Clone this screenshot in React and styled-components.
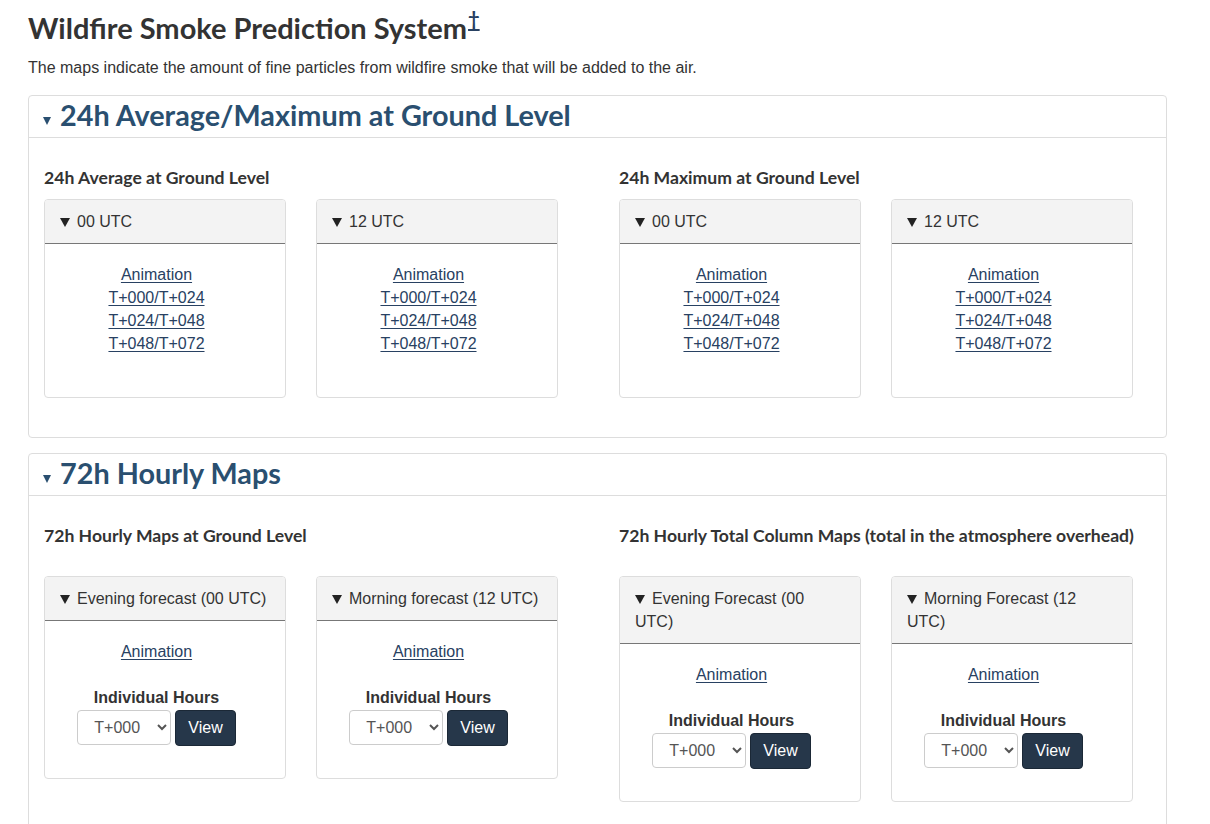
import React from "react";
import styled, { createGlobalStyle } from "styled-components";

const GlobalStyle = createGlobalStyle`
  html, body { margin: 0; padding: 0; background: #fff; }
  body {
    font-family: "Liberation Sans", Arial, sans-serif;
    font-size: 16px;
    line-height: 23px;
    color: #333;
  }
`;

const Page = styled.main`
  width: 1139px;
  padding: 10px 0 0 28px;
`;

const Title = styled.h1`
  font-family: Lato, "Noto Sans", sans-serif;
  font-weight: 700;
  font-size: 29px;
  line-height: 36px;
  margin: 0;
  color: #333;
`;

const FootRef = styled.a`
  font-size: 20px;
  line-height: 0;
  vertical-align: 12px;
  color: #284162;
  text-decoration: underline;
  text-underline-offset: 2px;
  margin-left: 1px;
`;

const Intro = styled.p`
  margin: 10px 0 16px;
`;

const Panel = styled.section`
  border: 1px solid #ddd;
  border-radius: 4px;
  margin-bottom: 15px;
  background: #fff;
`;

const PanelHeader = styled.div`
  display: flex;
  align-items: center;
  height: 41px;
  padding: 0 14px;
  border-bottom: 1px solid #ddd;
`;

const Caret = styled.span`
  display: inline-block;
  width: 0;
  height: 0;
  border-left: 4.5px solid transparent;
  border-right: 4.5px solid transparent;
  border-top: 8px solid #2a4f70;
  margin: 8px 9px 0 0;
`;

const PanelTitle = styled.h2`
  font-family: Lato, "Noto Sans", sans-serif;
  font-weight: 700;
  font-size: 28.8px;
  line-height: 36px;
  margin: -3px 0 0;
  color: #2a4f70;
`;

const PanelBody = styled.div`
  padding: 28px 15px 39px;
`;

const Columns = styled.div`
  display: grid;
  grid-template-columns: 533px 533px;
  column-gap: 42px;
  align-items: start;
`;

const ColTitle = styled.h3`
  font-family: Lato, "Noto Sans", sans-serif;
  font-weight: 700;
  font-size: 17.6px;
  line-height: 24px;
  margin: 0 0 ${(p) => p.$space}px;
  color: #333;
  white-space: nowrap;
`;

const CardGrid = styled.div`
  display: grid;
  grid-template-columns: 242px 242px;
  column-gap: 30px;
  align-items: start;
`;

const Card = styled.div`
  border: 1px solid #ddd;
  border-radius: 4px;
  overflow: hidden;
  background: #fff;
`;

const CardHeader = styled.div`
  background: #f3f3f3;
  border-bottom: 1px solid #777;
  padding: 10px 15px;
  color: #333;
`;

const Tri = styled.span`
  display: inline-block;
  width: 0;
  height: 0;
  border-left: 5px solid transparent;
  border-right: 5px solid transparent;
  border-top: 9px solid #222;
  margin: 0 7px 0 0;
`;

const CardBody = styled.div`
  padding: 19px 32px 20px 15px;
  display: flex;
  flex-direction: column;
  align-items: center;
  text-align: center;
`;

const LinkList = styled.div`
  display: flex;
  flex-direction: column;
  align-items: center;
  margin-bottom: ${(p) => p.$after}px;
`;

const Link = styled.a`
  color: #284162;
  text-decoration: underline;
  text-underline-offset: 2px;
`;

const FormLabel = styled.div`
  font-weight: 700;
  margin-bottom: 1px;
`;

const FormRow = styled.div`
  display: flex;
  align-items: flex-start;
  gap: 4px;
  margin-bottom: 12px;
`;

const Select = styled.select`
  width: 94px;
  height: 35px;
  border: 1px solid #ccc;
  border-radius: 4px;
  background: #fff;
  color: #555;
  font-family: "Liberation Sans", Arial, sans-serif;
  font-size: 16px;
  padding: 0 6px 0 12px;
`;

const Button = styled.button`
  height: 36px;
  padding: 0 12px;
  background: #26374a;
  color: #fff;
  border: 1px solid #1b2836;
  border-radius: 4px;
  font-family: "Liberation Sans", Arial, sans-serif;
  font-size: 16px;
  cursor: pointer;
`;

const LinkCard = ({ title }) => (
  <Card>
    <CardHeader>
      <Tri />
      {title}
    </CardHeader>
    <CardBody>
      <LinkList $after={22}>
        <Link href="#">Animation</Link>
        <Link href="#">T+000/T+024</Link>
        <Link href="#">T+024/T+048</Link>
        <Link href="#">T+048/T+072</Link>
      </LinkList>
    </CardBody>
  </Card>
);

const HourCard = ({ title }) => (
  <Card>
    <CardHeader>
      <Tri />
      {title}
    </CardHeader>
    <CardBody>
      <LinkList $after={23}>
        <Link href="#">Animation</Link>
      </LinkList>
      <FormLabel>Individual Hours</FormLabel>
      <FormRow>
        <Select defaultValue="T+000">
          {Array.from({ length: 73 }, (_, i) => {
            const v = "T+" + String(i).padStart(3, "0");
            return (
              <option key={v} value={v}>
                {v}
              </option>
            );
          })}
        </Select>
        <Button type="button">View</Button>
      </FormRow>
    </CardBody>
  </Card>
);

export default function App() {
  return (
    <>
      <GlobalStyle />
      <Page>
        <Title>
          Wildfire Smoke Prediction System
          <FootRef href="#">†</FootRef>
        </Title>
        <Intro>
          The maps indicate the amount of fine particles from wildfire smoke that will be added to the air.
        </Intro>

        <Panel>
          <PanelHeader>
            <Caret />
            <PanelTitle>24h Average/Maximum at Ground Level</PanelTitle>
          </PanelHeader>
          <PanelBody>
            <Columns>
              <div>
                <ColTitle $space={9}>24h Average at Ground Level</ColTitle>
                <CardGrid>
                  <LinkCard title="00 UTC" />
                  <LinkCard title="12 UTC" />
                </CardGrid>
              </div>
              <div>
                <ColTitle $space={9}>24h Maximum at Ground Level</ColTitle>
                <CardGrid>
                  <LinkCard title="00 UTC" />
                  <LinkCard title="12 UTC" />
                </CardGrid>
              </div>
            </Columns>
          </PanelBody>
        </Panel>

        <Panel>
          <PanelHeader>
            <Caret />
            <PanelTitle>72h Hourly Maps</PanelTitle>
          </PanelHeader>
          <PanelBody>
            <Columns>
              <div>
                <ColTitle $space={28}>72h Hourly Maps at Ground Level</ColTitle>
                <CardGrid>
                  <HourCard title="Evening forecast (00 UTC)" />
                  <HourCard title="Morning forecast (12 UTC)" />
                </CardGrid>
              </div>
              <div>
                <ColTitle $space={28}>
                  72h Hourly Total Column Maps (total in the atmosphere overhead)
                </ColTitle>
                <CardGrid>
                  <HourCard title="Evening Forecast (00 UTC)" />
                  <HourCard title="Morning Forecast (12 UTC)" />
                </CardGrid>
              </div>
            </Columns>
          </PanelBody>
        </Panel>
      </Page>
    </>
  );
}
